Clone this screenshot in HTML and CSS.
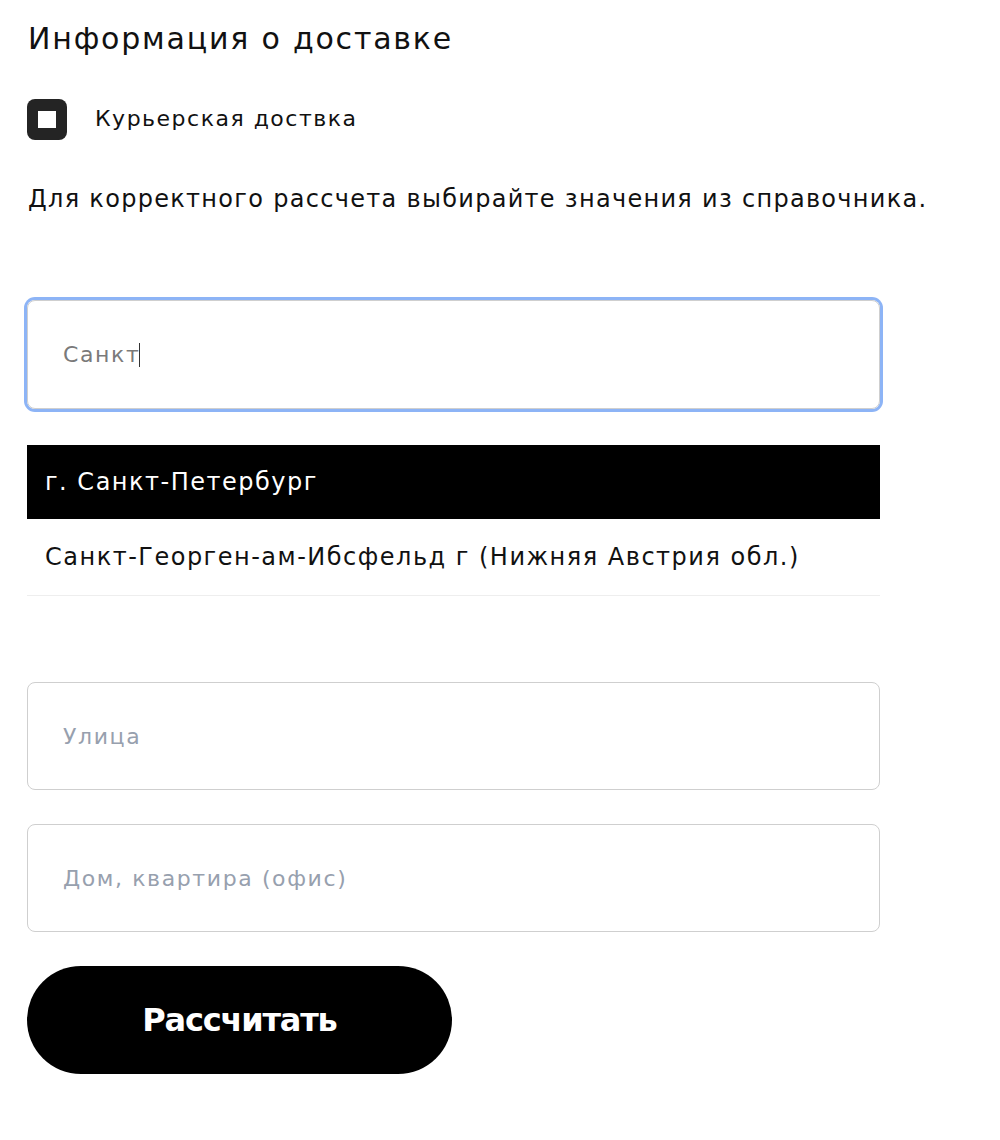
FILE: index.html
```html
<!DOCTYPE html>
<html lang="ru">
<head>
<meta charset="UTF-8">
<meta name="viewport" content="width=device-width, initial-scale=1.0">
<title>Информация о доставке</title>
<link rel="stylesheet" href="styles.css">
</head>
<body>

<div class="delivery">
  <h2 class="delivery-title">Информация о доставке</h2>

  <label class="courier">
    <span class="courier-box"><span class="courier-mark"></span></span>
    <span class="courier-text">Курьерская доствка</span>
  </label>

  <p class="delivery-hint">Для корректного рассчета выбирайте значения из справочника.</p>

  <div class="city">
    <div class="field field-focus">
      <span class="field-value">Санкт</span><span class="caret"></span>
    </div>
    <ul class="suggest">
      <li class="suggest-item active">г. Санкт-Петербург</li>
      <li class="suggest-item">Санкт-Георген-ам-Ибсфельд г (Нижняя Австрия обл.)</li>
    </ul>
  </div>

  <div class="address">
    <div class="field"><span class="field-placeholder">Улица</span></div>
    <div class="field"><span class="field-placeholder">Дом, квартира (офис)</span></div>
  </div>

  <button class="calc-btn">Рассчитать</button>
</div>

</body>
</html>
```

FILE: styles.css
```css
body {
  margin: 0;
  background: #fff;
  color: #111;
  font-family: "DejaVu Sans", "Noto Sans", sans-serif;
}

/* whole form */
.delivery {
  width: 853px;
  padding: 17px 0 0 27px;
  display: flex;
  flex-direction: column;
}

.delivery-title {
  margin: 0;
  font-size: 30px;
  font-weight: 400;
  line-height: 44px;
  letter-spacing: 1.8px;
  padding-left: 1px;
}

/* checkbox row */
.courier {
  display: flex;
  align-items: center;
  gap: 28px;
  margin-top: 38px;
}

.courier-box {
  width: 40px;
  height: 41px;
  border-radius: 8px;
  background: #242424;
  display: flex;
  align-items: center;
  justify-content: center;
}

.courier-mark {
  width: 18px;
  height: 17px;
  background: #fff;
}

.courier-text {
  font-size: 22px;
  letter-spacing: 1.5px;
  margin-top: -3px;
}

.delivery-hint {
  margin: 41px 0 0;
  font-size: 24px;
  line-height: 36px;
  letter-spacing: 1.3px;
  white-space: nowrap;
  padding-left: 1px;
}

/* inputs */
.field {
  border: 1px solid #cfcfcf;
  border-radius: 8px;
  box-sizing: border-box;
  height: 108px;
  display: flex;
  align-items: center;
  padding-left: 35px;
  font-size: 22px;
  letter-spacing: 1.6px;
}

.field-focus {
  height: 109px;
  box-shadow: 0 0 0 3px #8db4f6;
}

.field-value {
  color: #7a7a7a;
}

.caret {
  width: 1px;
  height: 24px;
  background: #333;
  margin-left: -1px;
}

.field-placeholder {
  color: #97a0ae;
}

.city {
  margin-top: 83px;
}

.suggest {
  list-style: none;
  margin: 36px 0 0;
  padding: 0;
}

.suggest-item {
  height: 77px;
  box-sizing: border-box;
  display: flex;
  align-items: center;
  padding-left: 18px;
  font-size: 24px;
  letter-spacing: 1.5px;
  border-bottom: 1px solid #eee;
}

.suggest-item.active {
  height: 74px;
  background: #000;
  color: #fff;
  border-bottom: 0;
}

.address {
  margin-top: 86px;
  display: flex;
  flex-direction: column;
  gap: 34px;
}

.calc-btn {
  margin-top: 34px;
  width: 425px;
  height: 108px;
  border: 0;
  border-radius: 54px;
  background: #000;
  color: #fff;
  font-family: inherit;
  font-size: 32px;
  font-weight: 700;
  letter-spacing: -1.2px;
}
```
